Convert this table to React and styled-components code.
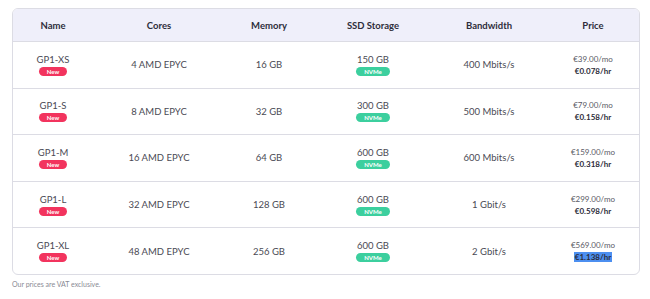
import styled, { createGlobalStyle } from "styled-components";

const GlobalStyle = createGlobalStyle`
  body {
    margin: 0;
    background: #fff;
    font-family: Lato, "Open Sans", sans-serif;
    color: #3a3a44;
  }
`;

const Page = styled.div`
  padding: 8px 10px 0 12px;
`;

const Card = styled.div`
  width: 628px;
  border: 1px solid #dcdce4;
  border-radius: 6px;
  overflow: hidden;
  box-sizing: border-box;
`;

const Table = styled.table`
  width: 100%;
  border-collapse: collapse;
  table-layout: fixed;
`;

const Head = styled.th`
  background: #efeffa;
  height: 32px;
  font-size: 9.5px;
  font-weight: 700;
  color: #2d2d3a;
  text-align: center;
  padding: 0;
  border-bottom: 1px solid #dcdce4;
  width: ${(p) => p.w}px;
`;

const Row = styled.tr`
  height: 46.6px;
  & + & td {
    border-top: 1px solid #dcdce4;
  }
`;

const Cell = styled.td`
  text-align: center;
  font-size: 9.5px;
  color: #4a4a54;
  padding: 0;
  vertical-align: middle;
`;

const Stack = styled.div`
  display: flex;
  flex-direction: column;
  align-items: center;
  gap: 2px;
`;

const Badge = styled.span`
  display: inline-block;
  background: ${(p) => (p.kind === "nvme" ? "#3ccf9e" : "#f2345e")};
  color: #fff;
  font-size: 6px;
  font-weight: 700;
  line-height: 9px;
  height: 9px;
  padding: 0 ${(p) => (p.kind === "nvme" ? "8px" : "7.5px")};
  border-radius: 5px;
`;

const Monthly = styled.span`
  font-size: 8px;
  color: #5a5a64;
`;

const Hourly = styled.span`
  font-size: 8px;
  font-weight: 700;
  color: #2d2d3a;
  background: ${(p) => (p.selected ? "#4c8ff0" : "transparent")};
  padding: 0 1px;
`;

const Note = styled.p`
  margin: 5px 0 0;
  font-size: 7px;
  color: #8a8a94;
`;

const columns = [
  ["Name", 80],
  ["Cores", 132],
  ["Memory", 88],
  ["SSD Storage", 120],
  ["Bandwidth", 112],
  ["Price", 96],
];

const plans = [
  { name: "GP1-XS", cores: "4 AMD EPYC", mem: "16 GB", ssd: "150 GB", bw: "400 Mbits/s", mo: "€39.00/mo", hr: "€0.078/hr" },
  { name: "GP1-S", cores: "8 AMD EPYC", mem: "32 GB", ssd: "300 GB", bw: "500 Mbits/s", mo: "€79.00/mo", hr: "€0.158/hr" },
  { name: "GP1-M", cores: "16 AMD EPYC", mem: "64 GB", ssd: "600 GB", bw: "600 Mbits/s", mo: "€159.00/mo", hr: "€0.318/hr" },
  { name: "GP1-L", cores: "32 AMD EPYC", mem: "128 GB", ssd: "600 GB", bw: "1 Gbit/s", mo: "€299.00/mo", hr: "€0.598/hr" },
  { name: "GP1-XL", cores: "48 AMD EPYC", mem: "256 GB", ssd: "600 GB", bw: "2 Gbit/s", mo: "€569.00/mo", hr: "€1.138/hr", selected: true },
];

const App = () => {
  return (
    <Page>
      <GlobalStyle />
      <Card>
        <Table>
          <thead>
            <tr>
              {columns.map(([label, w]) => (
                <Head key={label} w={w}>
                  {label}
                </Head>
              ))}
            </tr>
          </thead>
          <tbody>
            {plans.map((p) => (
              <Row key={p.name}>
                <Cell>
                  <Stack>
                    {p.name}
                    <Badge>New</Badge>
                  </Stack>
                </Cell>
                <Cell>{p.cores}</Cell>
                <Cell>{p.mem}</Cell>
                <Cell>
                  <Stack>
                    {p.ssd}
                    <Badge kind="nvme">NVMe</Badge>
                  </Stack>
                </Cell>
                <Cell>{p.bw}</Cell>
                <Cell>
                  <Stack>
                    <Monthly>{p.mo}</Monthly>
                    <Hourly selected={p.selected}>{p.hr}</Hourly>
                  </Stack>
                </Cell>
              </Row>
            ))}
          </tbody>
        </Table>
      </Card>
      <Note>Our prices are VAT exclusive.</Note>
    </Page>
  );
};

export default App;
